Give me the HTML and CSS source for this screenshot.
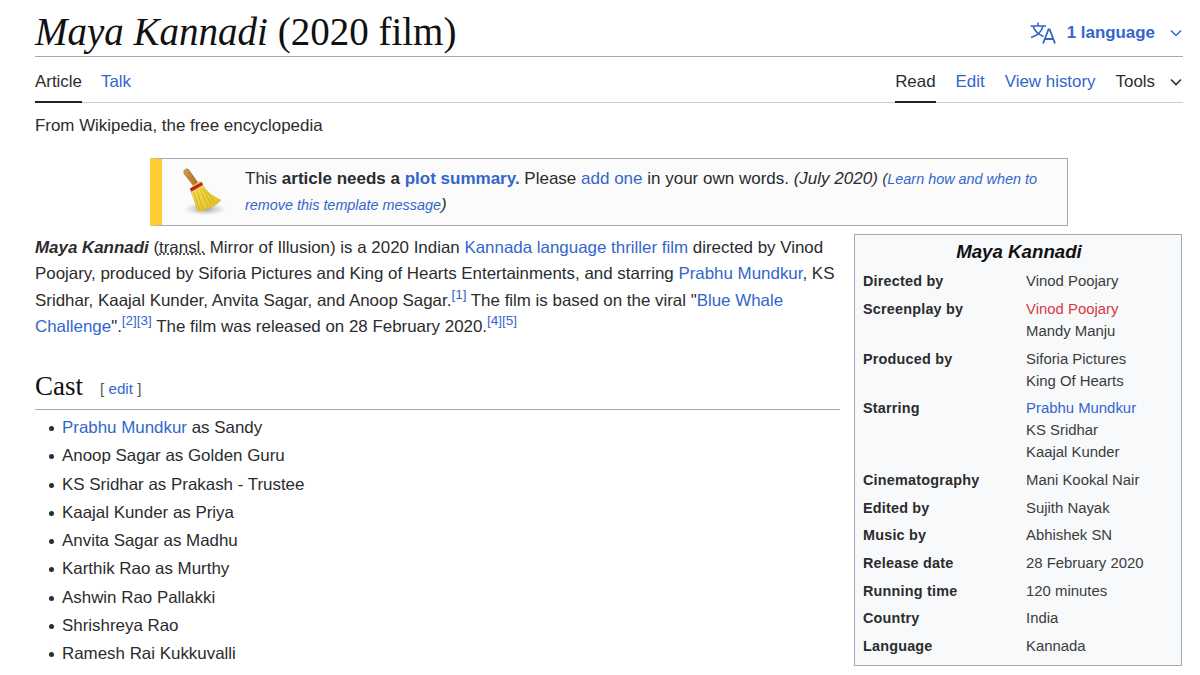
FILE: index.html
```html
<!DOCTYPE html>
<html lang="en">
<head>
<meta charset="utf-8">
<title>Maya Kannadi (2020 film)</title>
<link rel="stylesheet" href="styles.css">
</head>
<body>
<header class="title-row">
  <h1 class="title"><i>Maya Kannadi</i> (2020 film)</h1>
  <a class="lang" href="#">
    <svg class="lang-icon" viewBox="0 0 26 22" width="26" height="22" aria-hidden="true"><path d="M0.500 4H16M8 0.500V4M3 4c1.500 4.500 5.500 8.500 10.500 10.500M13 4c-1.200 5-5 9.500-12 11.500" fill="none" stroke="currentColor" stroke-width="1.600"/><path d="M13 21.500L18.500 7.500h1.200l5.300 14M14.800 17h8.500" fill="none" stroke="currentColor" stroke-width="1.800"/></svg>
    <span class="lang-label">1 language</span>
    <svg class="chev" viewBox="0 0 12 8" width="12" height="8" aria-hidden="true"><path d="M1 1.500l5 5 5-5" fill="none" stroke="currentColor" stroke-width="1.500"/></svg>
  </a>
</header>
<nav class="tabs">
  <div class="tab-group">
    <a class="tab active" href="#">Article</a>
    <a class="tab" href="#">Talk</a>
  </div>
  <div class="tab-group views">
    <a class="tab active" href="#">Read</a>
    <a class="tab" href="#">Edit</a>
    <a class="tab" href="#">View history</a>
    <span class="tab tools">Tools
      <svg class="chev" viewBox="0 0 12 8" width="12" height="8" aria-hidden="true"><path d="M1 1.500l5 5 5-5" fill="none" stroke="currentColor" stroke-width="1.600"/></svg>
    </span>
  </div>
</nav>
<p class="tagline">From Wikipedia, the free encyclopedia</p>
<aside class="notice">
  <svg class="broom" viewBox="0 0 50 50" width="50" height="50" aria-hidden="true">
    <defs>
      <radialGradient id="sh"><stop offset="0" stop-color="#7f848e" stop-opacity=".8"/><stop offset="1" stop-color="#a8acb4" stop-opacity="0"/></radialGradient>
      <linearGradient id="br" x1="0" y1="0" x2="1" y2="1"><stop offset="0" stop-color="#f8e85c"/><stop offset="1" stop-color="#e0b618"/></linearGradient>
      <linearGradient id="hd" x1="0" y1="0" x2="1" y2="0"><stop offset="0" stop-color="#d49a4a"/><stop offset="1" stop-color="#a56a22"/></linearGradient>
    </defs>
    <ellipse cx="25" cy="42" rx="21" ry="6.500" fill="url(#sh)"/>
    <path d="M3.800 4.500c.7-2.800 4-3.500 5.500-1L18.500 16.500l-4.500 2.800L4.600 7.500c-.7-1-.9-2-.8-3z" fill="url(#hd)" stroke="#8f5f20" stroke-width=".5"/>
    <path d="M12 19l8-5 2 2.500-8.500 5.500z" fill="#eac83a"/>
    <path d="M9.800 21.500l12.200-6.500 1 3.300-11.800 6.700z" fill="#c4202c"/>
    <path d="M11 25l12-6.800c3 5.500 9.500 11.500 18 14.800-4 5-13.500 10.200-22 11-1.300-.5-2.200-1-2.500-2-1-6-3-12-5.500-17z" fill="url(#br)" stroke="#cfa71e" stroke-width=".5"/>
    <path d="M14 25l5.500 18M17 23.500l6 19M20 22l8 18.500M22.500 21l9 17M25 22.500l9.500 13" stroke="#c9a21c" stroke-width=".7" fill="none"/>
  </svg>
  <div class="notice-text">This <b>article needs a <a href="#">plot summary.</a></b> Please <a href="#">add one</a> in your own words. <i>(July 2020)</i> <small class="hint"><i>(<a href="#">Learn how and when to remove this template message</a></i></small><i>)</i></div>
</aside>
<div class="columns">
  <main class="article">
    <p class="lead"><b><i>Maya Kannadi</i></b> (<abbr class="transl">transl.</abbr> Mirror of Illusion) is a 2020 Indian <a href="#">Kannada language</a> <a href="#">thriller film</a> directed by Vinod Poojary, produced by Siforia Pictures and King of Hearts Entertainments, and starring <a href="#">Prabhu Mundkur</a>, KS Sridhar, Kaajal Kunder, Anvita Sagar, and Anoop Sagar.<sup><a href="#">[1]</a></sup> The film is based on the viral "<a href="#">Blue Whale Challenge</a>".<sup><a href="#">[2]</a><a href="#">[3]</a></sup> The film was released on 28 February 2020.<sup><a href="#">[4]</a><a href="#">[5]</a></sup></p>
    <h2 class="section"><span class="section-name">Cast</span><span class="section-edit">[ <a href="#">edit</a> ]</span></h2>
    <ul class="cast">
      <li><a href="#">Prabhu Mundkur</a> as Sandy</li>
      <li>Anoop Sagar as Golden Guru</li>
      <li>KS Sridhar as Prakash - Trustee</li>
      <li>Kaajal Kunder as Priya</li>
      <li>Anvita Sagar as Madhu</li>
      <li>Karthik Rao as Murthy</li>
      <li>Ashwin Rao Pallakki</li>
      <li>Shrishreya Rao</li>
      <li>Ramesh Rai Kukkuvalli</li>
    </ul>
  </main>
  <aside class="infobox">
    <div class="info-title">Maya Kannadi</div>
    <dl class="info-grid">
      <dt>Directed by</dt><dd>Vinod Poojary</dd>
      <dt>Screenplay by</dt><dd><a class="red" href="#">Vinod Poojary</a><br>Mandy Manju</dd>
      <dt>Produced by</dt><dd>Siforia Pictures<br>King Of Hearts</dd>
      <dt>Starring</dt><dd><a href="#">Prabhu Mundkur</a><br>KS Sridhar<br>Kaajal Kunder</dd>
      <dt>Cinematography</dt><dd>Mani Kookal Nair</dd>
      <dt>Edited by</dt><dd>Sujith Nayak</dd>
      <dt>Music by</dt><dd>Abhishek SN</dd>
      <dt>Release date</dt><dd>28 February 2020</dd>
      <dt>Running time</dt><dd>120 minutes</dd>
      <dt>Country</dt><dd>India</dd>
      <dt>Language</dt><dd>Kannada</dd>
    </dl>
  </aside>
</div>
</body>
</html>
```
FILE: styles.css
```css
* { box-sizing: border-box; }
html, body { margin: 0; height: 675px; overflow: hidden; }
body {
  padding: 0 17px 0 35px;
  background: #fff;
  color: #2b2c2d;
  font-family: "Liberation Sans", Arial, sans-serif;
  font-size: 16.920px;
}
a { color: #3366cc; text-decoration: none; }
.title-row {
  display: flex;
  align-items: center;
  justify-content: space-between;
  height: 57px;
  border-bottom: 1px solid #a2a9b1;
}
.title {
  margin: 0;
  padding-top: 7px;
  font-family: "Liberation Serif", Georgia, serif;
  font-size: 39px;
  font-weight: 400;
  line-height: 46px;
  color: #111;
}
.lang {
  display: flex;
  align-items: center;
  margin: 9px 1px 0 0;
  font-weight: 700;
}
.lang-label { margin: 0 15px 0 11px; }
.tabs {
  display: flex;
  justify-content: space-between;
  height: 46px;
  border-bottom: 1px solid #c8ccd1;
}
.tab-group { display: flex; gap: 19px; }
.views { gap: 20px; margin-right: 1px; }
.tab {
  display: flex;
  align-items: center;
  height: 46px;
  padding-top: 6px;
  border-bottom: 2px solid transparent;
}
.tab.active { color: #2b2c2d; border-bottom-color: #202122; }
.tools { color: #2b2c2d; gap: 15px; }
.tagline { margin: 0; padding-top: 13px; height: 55px; line-height: 20px; }
.notice {
  display: flex;
  align-items: center;
  margin: 0 115px;
  height: 68px;
  background: #fbfbfb;
  border: 1px solid #a2a9b1;
  border-left: 12px solid #ffcc33;
}
.broom { flex: none; margin: 0 15px 0 18px; }
.notice-text { font-size: 17px; line-height: 26.500px; padding-right: 20px; }
.hint { font-size: 14.400px; }
.columns { display: flex; gap: 14px; margin-top: 8px; }
.article { width: 805px; flex: none; }
.lead { margin: 0; padding-top: 1px; line-height: 26.400px; }
.transl { text-decoration: underline dotted; }
sup { font-size: 13.500px; line-height: 1; }
.section {
  display: flex;
  align-items: flex-start;
  margin: 29px 0 0;
  height: 40px;
  border-bottom: 1px solid #a2a9b1;
  font-weight: 400;
}
.section-name { font-family: "Liberation Serif", Georgia, serif; font-size: 27px; line-height: 32px; color: #111; }
.section-edit { font-size: 15.200px; line-height: 37px; margin-left: 17px; color: #54595d; }
.cast { margin: 4.600px 0 0; padding: 0 0 0 27px; line-height: 28.250px; list-style: none; }
.cast li::before {
  content: "";
  display: inline-block;
  width: 5px;
  height: 5px;
  margin: 0 8px 2px -13px;
  border-radius: 50%;
  background: #2b2c2d;
}
.infobox {
  width: 328px;
  flex: none;
  height: 432px;
  background: #f8f9fa;
  border: 1px solid #a2a9b1;
  padding: 0 8px;
}
.info-title { padding-left: 2px; margin-bottom: 1.300px; text-align: center; font-size: 18.700px; font-style: italic; font-weight: 700; line-height: 34px; color: #111; }
.info-grid {
  display: grid;
  grid-template-columns: 163px 1fr;
  row-gap: 5.700px;
  margin: 0;
  line-height: 22px;
}
.info-grid dt { font-size: 14.400px; font-weight: 700; letter-spacing: .2px; }
.info-grid dd { margin: 0; font-size: 14.900px; color: #3a3d40; }
.red { color: #d73a45; }
```
